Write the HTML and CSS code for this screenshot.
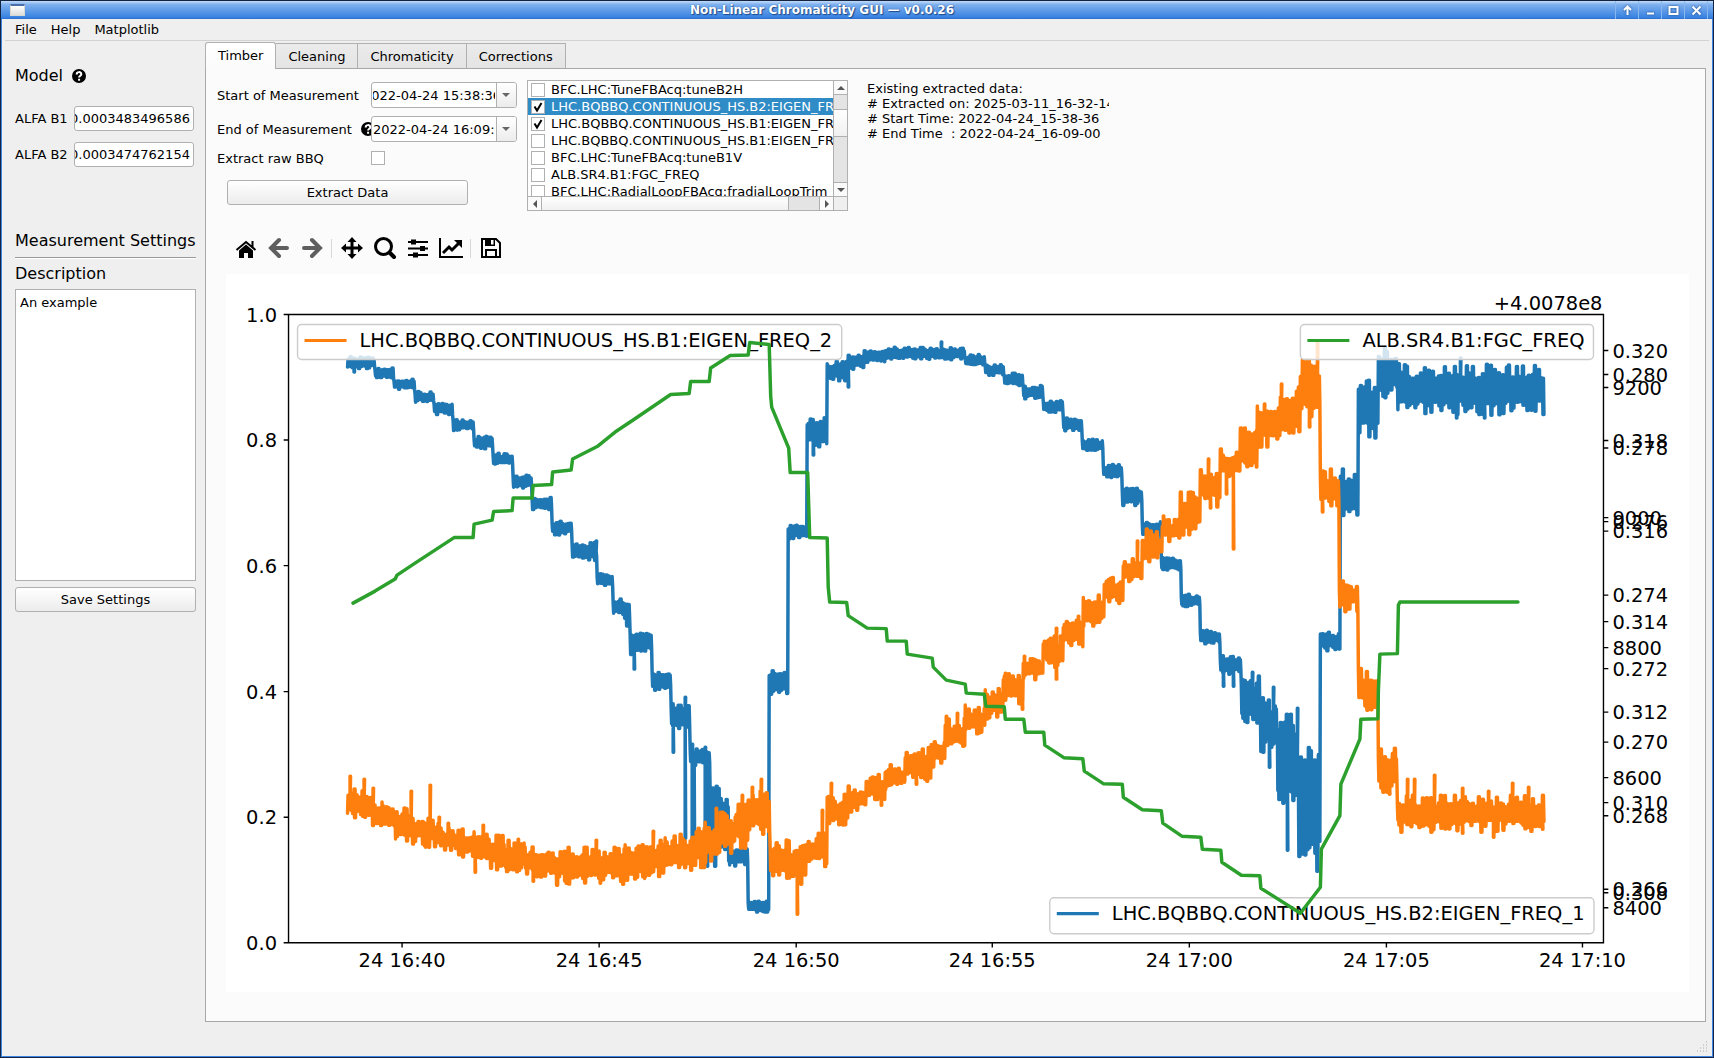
FILE: index.html
```html
<!DOCTYPE html>
<html lang="en">
<head>
    <meta charset="UTF-8">
    <meta name="description" content="Non-Linear Chromaticity GUI">
    <title>Non-Linear Chromaticity GUI — v0.0.26</title>
    <link rel="stylesheet" href="styles.css">
</head>
<body>
    <div class="window">
        <header class="titlebar">
            <span class="app-icon"></span>
            <h1>Non-Linear Chromaticity GUI — v0.0.26</h1>
            <div class="window-buttons">
                <button type="button" aria-label="Keep above"><svg viewBox="0 0 11 11"><path d="M5.500 1v9M2 5l3.500-3.500L9 5" /></svg></button>
                <button type="button" aria-label="Minimize"><svg viewBox="0 0 11 11"><path d="M2 8.500h7" /></svg></button>
                <button type="button" aria-label="Maximize"><svg viewBox="0 0 11 11"><path d="M1.500 2h8v7h-8z" /></svg></button>
                <button type="button" aria-label="Close"><svg viewBox="0 0 11 11"><path d="M1.500 1.500l8 8M9.500 1.500l-8 8" /></svg></button>
            </div>
        </header>

        <div class="frame">
            <nav class="menubar">
                <a href="#">File</a>
                <a href="#">Help</a>
                <a href="#">Matplotlib</a>
            </nav>

            <div class="main">
                <aside class="sidebar">
                    <h2 class="model-title">Model
                        <svg class="help" viewBox="0 0 14 14"><circle cx="7" cy="7" r="7" /><path d="M4.700 5.400C4.700 2.400 9.300 2.400 9.300 5.200 9.300 6.800 7.100 6.700 7.100 8.500M7.100 9.800v1.900" /></svg>
                    </h2>
                    <div class="alfa-row">
                        <label for="alfaB1">ALFA B1</label>
                        <input type="text" id="alfaB1" value="0.0003483496586" data-scroll="200">
                    </div>
                    <div class="alfa-row">
                        <label for="alfaB2">ALFA B2</label>
                        <input type="text" id="alfaB2" value="0.0003474762154" data-scroll="200">
                    </div>
                    <h2 class="settings-title">Measurement Settings</h2>
                    <label class="description-label" for="description">Description</label>
                    <textarea id="description">An example</textarea>
                    <button type="button" class="btn">Save Settings</button>
                </aside>

                <section class="tabs">
                    <div class="tablist" role="tablist">
                        <button type="button" class="tab active" role="tab" aria-selected="true">Timber</button>
                        <button type="button" class="tab" role="tab">Cleaning</button>
                        <button type="button" class="tab" role="tab">Chromaticity</button>
                        <button type="button" class="tab" role="tab">Corrections</button>
                    </div>

                    <div class="pane">
                        <div class="top">
                            <form class="extract-form">
                                <label for="start">Start of Measurement</label>
                                <div class="datebox">
                                    <input type="text" id="start" value="2022-04-24 15:38:36" data-scroll="10">
                                    <button type="button" aria-label="Pick start date"></button>
                                </div>
                                <label for="end">End of Measurement
                                    <svg class="help" viewBox="0 0 14 14"><circle cx="7" cy="7" r="7" /><path d="M4.700 5.400C4.700 2.400 9.300 2.400 9.300 5.200 9.300 6.800 7.100 6.700 7.100 8.500M7.100 9.800v1.900" /></svg>
                                </label>
                                <div class="datebox">
                                    <input type="text" id="end" value="2022-04-24 16:09:00">
                                    <button type="button" aria-label="Pick end date"></button>
                                </div>
                                <label for="rawBbq">Extract raw BBQ</label>
                                <input type="checkbox" id="rawBbq">
                                <button type="button" class="btn extract">Extract Data</button>
                            </form>

                            <div class="listbox">
                                <ul class="variables">
                                    <li><label><input type="checkbox">BFC.LHC:TuneFBAcq:tuneB2H</label></li>
                                    <li class="selected"><label><input type="checkbox" checked>LHC.BQBBQ.CONTINUOUS_HS.B2:EIGEN_FREQ_1</label></li>
                                    <li><label><input type="checkbox" checked>LHC.BQBBQ.CONTINUOUS_HS.B1:EIGEN_FREQ_2</label></li>
                                    <li><label><input type="checkbox">LHC.BQBBQ.CONTINUOUS_HS.B1:EIGEN_FREQ_1</label></li>
                                    <li><label><input type="checkbox">BFC.LHC:TuneFBAcq:tuneB1V</label></li>
                                    <li><label><input type="checkbox">ALB.SR4.B1:FGC_FREQ</label></li>
                                    <li><label><input type="checkbox">BFC.LHC:RadialLoopFBAcq:fradialLoopTrim</label></li>
                                </ul>
                                <div class="vbar">
                                    <span class="arrow up"></span>
                                    <span class="track"><span class="thumb"></span></span>
                                    <span class="arrow down"></span>
                                </div>
                                <div class="hbar">
                                    <span class="arrow left"></span>
                                    <span class="track"><span class="thumb"></span></span>
                                    <span class="arrow right"></span>
                                </div>
                                <span class="corner"></span>
                            </div>

                            <pre class="info">Existing extracted data:
# Extracted on: 2025-03-11_16-32-14
# Start Time: 2022-04-24_15-38-36
# End Time  : 2022-04-24_16-09-00</pre>
                        </div>

                        <div class="toolbar">
                            <button type="button" aria-label="Home"><svg viewBox="0 0 24 24"><path d="M12 8.500l7 6V22h-5v-5h-4v5H5v-7.500z" /><path class="roof" d="M2.500 14L12 6l9.500 8M18.500 5v6" /></svg></button>
                            <button type="button" aria-label="Back" disabled><svg viewBox="0 0 24 24"><path class="thick" d="M20 12H5M12 4l-8 8 8 8" /></svg></button>
                            <button type="button" aria-label="Forward" disabled><svg viewBox="0 0 24 24"><path class="thick" d="M4 12h15M12 4l8 8-8 8" /></svg></button>
                            <span class="sep"></span>
                            <button type="button" aria-label="Pan"><svg viewBox="0 0 24 24"><path class="mid" d="M12 4v16M4 12h16" /><path d="M12 1l4.500 5h-9zM12 23l4.500-5h-9zM1 12l5-4.500v9zM23 12l-5-4.500v9z" /></svg></button>
                            <button type="button" aria-label="Zoom"><svg viewBox="0 0 24 24"><circle class="mid" cx="10.500" cy="10.500" r="8" /><path class="thick" d="M17 17l4 4" /></svg></button>
                            <button type="button" aria-label="Configure subplots"><svg viewBox="0 0 24 24"><path class="line" d="M2 6h20M2 12.500h20M2 19h20" /><path d="M5 3.500h5v5H5zM14 10h5v5h-5zM7 16.500h5v5H7z" /></svg></button>
                            <button type="button" aria-label="Edit axes"><svg viewBox="0 0 24 24"><path class="line" d="M1 2v19h23" /><path class="mid" d="M4 17l6-6 3 3 7-7" /><path d="M15 4h8v8z" /></svg></button>
                            <span class="sep"></span>
                            <button type="button" aria-label="Save"><svg viewBox="0 0 24 24"><path class="line" d="M3 3h14l4 4v14H3zM7 21v-7h10v7" /><path d="M6 3h10v7H6z" /><path class="hole" d="M12 4h2.500v4.500H12z" /></svg></button>
                        </div>

                        <svg class="figure" id="figure" viewBox="0 0 1053 517" role="img" aria-label="Timber data"></svg>
                    </div>
                </section>
            </div>

            <footer class="statusbar">
                <svg class="grip" viewBox="0 0 12 12"><path d="M10 1h1M7 4h1M10 4h1M4 7h1M7 7h1M10 7h1M1 10h1M4 10h1M7 10h1M10 10h1" /></svg>
            </footer>
        </div>
    </div>

    <script src="plot.js"></script>
</body>
</html>
```
FILE: styles.css
```css
* {
    box-sizing: border-box;
}

body {
    margin: 0;
    font-family: "DejaVu Sans", sans-serif;
    font-size: 13px;
    color: #000;
    background-color: #14233f;
}

button, input, textarea {
    font: inherit;
    color: inherit;
}

h1, h2, ul, pre {
    margin: 0;
    padding: 0;
}

.window {
    display: flex;
    flex-direction: column;
    min-height: 100vh;
    padding: 1px;
}

/* Title bar */
.titlebar {
    display: flex;
    align-items: center;
    height: 18px;
    background: linear-gradient(#c3dcfa, #7eb0ee 20%, #5796e6 60%, #3580e0 94%, #2467c4);
}

.app-icon {
    width: 15px;
    height: 12px;
    margin: 0 4px 0 9px;
    background: linear-gradient(#fff, #ddd);
    border: 1px solid #d8d8d0;
    border-top: 2px solid #4a6ea8;
}

.titlebar h1 {
    flex: 1;
    font-size: 12px;
    line-height: 18px;
    text-align: center;
    color: #fff;
    text-shadow: 0 0 1px #1d4a8c, 1px 1px 1px #1d4a8c;
}

.window-buttons {
    display: flex;
    margin-right: 5px;
    border-right: 1px solid #8ab6ef;
}

.window-buttons button {
    width: 23px;
    height: 18px;
    padding: 3px 6px;
    background: none;
    border: none;
    border-left: 1px solid #8ab6ef;
}

.window-buttons svg {
    display: block;
    width: 11px;
    height: 11px;
    fill: none;
    stroke: #fff;
    stroke-width: 2;
    filter: drop-shadow(0 0 1px #1d4a8c);
}

.frame {
    display: flex;
    flex: 1;
    flex-direction: column;
    padding: 0 3px;
    background-color: #efefef;
    border: solid #3f87e6;
    border-width: 0 1px 1px;
}

/* Menu */
.menubar {
    display: flex;
    gap: 14px;
    height: 22px;
    padding-left: 10px;
    line-height: 21px;
    border-bottom: 1px solid #d2d2d2;
}

.menubar a {
    color: inherit;
    text-decoration: none;
}

.main {
    display: flex;
    flex: 1;
}

/* Left side */
.sidebar {
    display: flex;
    flex-direction: column;
    width: 200px;
    padding: 25px 9px 0 10px;
}

.sidebar h2, .description-label {
    font-size: 16px;
    font-weight: normal;
    line-height: 20px;
    white-space: nowrap;
}

.help {
    flex: none;
    width: 14px;
    height: 14px;
}

.help path {
    fill: none;
    stroke: #fff;
    stroke-width: 2;
}

.model-title {
    display: flex;
    align-items: center;
    gap: 9px;
    margin-bottom: 20px;
}

.alfa-row {
    display: flex;
    align-items: center;
    justify-content: space-between;
    margin: 0 2px 11px 0;
}

.alfa-row input {
    width: 120px;
    height: 25px;
    padding: 0 3px 0 0;
    border: 1px solid #b0b0b0;
    border-radius: 3px;
}

.settings-title {
    height: 27px;
    margin-top: 53px;
    border-bottom: 1px solid #999;
    box-shadow: 0 1px #fff;
}

.description-label {
    margin: 6px 0 5px;
}

#description {
    height: 292px;
    margin-bottom: 6px;
    padding: 5px 4px;
    border: 1px solid #b0b0b0;
    resize: none;
}

.btn {
    height: 25px;
    padding: 0;
    background: linear-gradient(#fff, #ececec);
    border: 1px solid #b0b0b0;
    border-radius: 3px;
}

/* Tabs */
.tabs {
    display: flex;
    flex: 1;
    flex-direction: column;
    min-width: 0;
    padding: 1px 3px 0 0;
}

.tablist {
    display: flex;
    align-items: flex-end;
    height: 26px;
}

.tab {
    height: 25px;
    padding: 0 12px;
    background: linear-gradient(#ebebeb, #e4e4e4);
    border: solid #b0b0b0;
    border-width: 1px 1px 0 0;
}

.tab.active {
    height: 27px;
    margin-bottom: -1px;
    padding-bottom: 1px;
    background: linear-gradient(#fff, #fbfbfb);
    border-left-width: 1px;
    border-radius: 3px 3px 0 0;
    position: relative;
}

.pane {
    flex: 1;
    padding: 11px 16px 27px 11px;
    background-color: #fbfbfb;
    border: 1px solid #a8a8a8;
}

.top {
    display: flex;
    align-items: flex-start;
}

.extract-form {
    display: grid;
    grid-template-columns: 154px 146px;
    grid-template-rows: 26px 26px 16px 25px;
    row-gap: 8px;
    align-items: center;
    margin-right: 10px;
    padding-top: 2px;
}

.extract-form label {
    display: flex;
    align-items: center;
    gap: 9px;
    white-space: nowrap;
}

.datebox {
    display: flex;
    height: 26px;
    background-color: #fff;
    border: 1px solid #b0b0b0;
    border-radius: 3px;
    overflow: hidden;
}

.datebox input {
    flex: 1;
    min-width: 0;
    padding: 0 1px;
    background: none;
    border: none;
}

.datebox button {
    width: 20px;
    padding: 0 0 0 5px;
    background: linear-gradient(#fff, #ececec);
    border: none;
    border-left: 1px solid #b0b0b0;
}

.datebox button::before {
    content: "";
    display: block;
    width: 0;
    border: solid transparent;
    border-width: 4px 4px 0;
    border-top-color: #666;
}

input[type="checkbox"] {
    flex: none;
    appearance: none;
    width: 14px;
    height: 14px;
    margin: 0;
    background: #fff center no-repeat;
    border: 1px solid #b0b0b0;
}

input[type="checkbox"]:checked {
    background-image: url("data:image/svg+xml,%3Csvg xmlns='http://www.w3.org/2000/svg' width='12' height='12'%3E%3Cpath d='M2.500 5.500L5 9.500 9.500 2' fill='none' stroke='black' stroke-width='2'/%3E%3C/svg%3E");
}

.extract {
    grid-column: 1 / 3;
    width: 241px;
    margin: 12px 0 0 10px;
}

/* Variable list */
.listbox {
    display: grid;
    grid-template-columns: minmax(0, 1fr) 14px;
    grid-template-rows: 115px 14px;
    width: 321px;
    margin-right: 19px;
    background-color: #fff;
    border: 1px solid #b0b0b0;
}

.variables {
    list-style: none;
    overflow: hidden;
}

.variables label {
    display: flex;
    align-items: center;
    gap: 6px;
    height: 17px;
    padding-left: 3px;
    white-space: nowrap;
}

.variables .selected {
    color: #fff;
    background-color: #308cc6;
}

.vbar, .hbar {
    display: flex;
    background-color: #e4e4e4;
    border: solid #b0b0b0;
}

.vbar {
    flex-direction: column;
    border-width: 0 0 0 1px;
}

.hbar {
    border-width: 1px 0 0;
}

.track {
    display: flex;
    flex: 1;
}

.vbar .track {
    flex-direction: column;
    border: solid #b0b0b0;
    border-width: 1px 0;
}

.hbar .track {
    border: solid #b0b0b0;
    border-width: 0 1px;
}

.thumb {
    background: linear-gradient(#fff, #f0f0f0);
}

.vbar .thumb {
    height: 28px;
    margin-top: 14px;
    border: solid #b0b0b0;
    border-width: 1px 0;
}

.hbar .thumb {
    width: 89%;
    border-right: 1px solid #b0b0b0;
}

.arrow {
    display: flex;
    align-items: center;
    justify-content: center;
    width: 13px;
    height: 13px;
    background-color: #fafafa;
}

.arrow::before {
    content: "";
    border: 4px solid transparent;
}

.up::before {
    border-top-width: 0;
    border-bottom-color: #555;
}

.down::before {
    border-bottom-width: 0;
    border-top-color: #555;
}

.left::before {
    border-left-width: 0;
    border-right-color: #555;
}

.right::before {
    border-right-width: 0;
    border-left-color: #555;
}

.corner {
    background-color: #efefef;
    border: solid #b0b0b0;
    border-width: 1px 0 0 1px;
}

.info {
    width: 242px;
    padding-top: 1px;
    overflow: hidden;
    font: inherit;
    line-height: 15px;
}

/* Matplotlib toolbar and figure */
.toolbar {
    display: flex;
    align-items: center;
    gap: 9px;
    margin: 25px 0 14px 17px;
}

.toolbar button {
    width: 24px;
    height: 24px;
    padding: 0;
    background: none;
    border: none;
}

.toolbar button:disabled {
    opacity: .62;
}

.toolbar svg {
    display: block;
}

.toolbar .line, .toolbar .roof, .toolbar .mid, .toolbar .thick {
    fill: none;
    stroke: #000;
    stroke-width: 2;
}

.toolbar .mid {
    stroke-width: 3;
}

.toolbar .thick {
    stroke-width: 4;
    stroke-linecap: round;
}

.toolbar .hole {
    fill: #fff;
}

.sep {
    width: 1px;
    height: 19px;
    margin: 0 -1px 0 -2px;
    background-color: #d8d8d8;
}

.figure {
    display: block;
    width: calc(100% - 9px);
    margin-left: 9px;
    background-color: #fff;
}

.figure text {
    font-size: 14px;
}

.axis {
    fill: none;
    stroke: #000;
}

.series {
    fill: none;
    stroke-width: 2.5;
    stroke-linejoin: round;
    stroke-linecap: round;
}

.blue {
    stroke: #1f77b4;
}

.orange {
    stroke: #ff7f0e;
}

.green {
    stroke: #2ca02c;
}

.legend {
    fill: #fff;
    fill-opacity: .8;
    stroke: #ccc;
}

/* Status bar */
.statusbar {
    display: flex;
    align-items: flex-end;
    justify-content: flex-end;
    height: 34px;
    padding: 0 1px 3px;
}

.grip {
    width: 12px;
    height: 12px;
    stroke: #aaa;
}
```
FILE: plot.js
```js
// Figure pixels (100 dpi) are turned into points (72 dpi), the unit of the svg
const LEFT = 226;
const TOP = 274;
const px = x => ((x - LEFT) * 0.72).toFixed(2);
const py = y => ((y - TOP) * 0.72).toFixed(2);

// Each step is [end of step, highest, lowest]
const blueSteps = [
    [375, 358, 367], [394, 369, 377], [415, 380, 388], [434, 393, 401], [453, 405, 413], [474, 421, 429],
    [493, 438, 447], [513, 455, 464], [532, 476, 487], [552, 498, 508], [572, 523, 533], [597, 545, 558],
    [613, 575, 585], [624, 601, 612], [630, 601, 622], [652, 633, 651], [671, 672, 688], [690, 704, 728], [710, 751, 763],
    [729, 794, 858], [748, 848, 864], [769, 901, 911], [788, 673, 692], [807, 527, 537], [827, 420, 443],
    [848, 364, 378], [864, 355, 367], [885, 351, 361], [965, 349, 358], [985, 356, 365], [1004, 366, 374],
    [1023, 375, 384], [1043, 387, 397], [1063, 402, 411], [1082, 419, 429], [1103, 441, 450], [1122, 466, 476],
    [1142, 490, 503], [1161, 523, 533], [1181, 559, 569], [1200, 596, 605], [1220, 632, 642], [1241, 658, 672],
    [1250, 682, 720], [1260, 682, 722], [1268, 702, 745], [1277, 705, 745], [1298, 722, 795], [1320, 748, 863],
    [1340, 634, 648], [1358, 475, 516], [1378, 384, 430], [1390, 354, 394], [1397, 354, 386], [1544, 371, 408]
];
const blueSpikes = {
    354: 372, 596: 541, 634: 669, 673: 752, 685: [697, 838], 692: [744, 856], 694: 858, 705: [747, 864], 707: 866,
    813: 455, 848: 387, 941: 342, 1223: 686, 1233: 686, 1252: 672, 1269: 767, 1273: 687, 1287: 850,
    1297: 708, 1460: 358, 1456: 418, 1484: 418
};

const orangeSteps = [
    [372, 795, 813], [383, 806, 822], [395, 809, 823], [410, 812, 834], [425, 820, 839], [440, 824, 841],
    [455, 831, 847], [475, 835, 850], [490, 840, 855], [505, 843, 864], [525, 848, 866], [550, 852, 870],
    [600, 855, 877], [625, 854, 876], [645, 850, 872], [665, 848, 870], [690, 842, 866], [705, 836, 862],
    [720, 830, 857], [735, 820, 845], [748, 812, 840], [770, 798, 826], [790, 846, 870], [806, 853, 876],
    [827, 841, 860], [848, 802, 820], [866, 792, 806], [885, 780, 794], [905, 770, 784], [931, 754, 773],
    [945, 743, 760], [965, 726, 744], [985, 712, 728], [1003, 694, 713], [1023, 680, 697], [1043, 662, 675],
    [1063, 642, 660], [1083, 625, 640], [1104, 599, 618], [1123, 582, 599], [1142, 563, 576], [1162, 537, 555],
    [1180, 524, 536], [1200, 500, 527], [1220, 477, 499], [1240, 455, 473], [1257, 436, 460], [1280, 412, 439],
    [1300, 395, 425], [1320, 368, 410], [1339, 477, 498], [1358, 587, 604], [1378, 676, 702], [1397, 756, 784],
    [1544, 803, 824]
];
const orangeSpikes = {
    350: 776, 364: 779, 373: 788, 411: 791, 430: 785, 439: 817, 448: 823, 475: 872, 483: 825, 518: 839,
    533: 881, 566: 883, 596: 840, 600: 883, 653: 831, 716: 808, 742: 795, 752: 787, 761: 779, 797: 914,
    822: 810, 831: 783, 881: 805, 916: 784, 946: 716, 957: 713, 1005: 673, 1022: 709, 1024: 656,
    1056: [628, 679], 1078: 616, 1137: 541, 1163: 516, 1208: 459, 1210: 508, 1226: 494, 1233: 549,
    1256: 467, 1264: 404, 1281: 384, 1309: 427, 1317: 343, 1322: 512, 1389: 794, 1407: 779, 1414: 779,
    1434: 775, 1462: [788, 833], 1488: 791, 1493: 837, 1512: 783, 1528: 787, 1542: 829
};

const greenLine = [
    [353, 603], [375, 591], [395, 579], [397, 575], [415, 563], [454, 537.5], [473, 537.5], [474, 524],
    [492, 520], [493.5, 511.5], [512, 510.5], [513, 498], [532, 498], [533, 485.5], [551.5, 484.5], [552.5, 472],
    [571, 470], [572.5, 459], [597, 446.5], [615, 432], [633, 420], [670.5, 394.5], [689, 393.5], [690.5, 381.5],
    [709, 381.5], [710.5, 368], [730, 355.5], [748, 355], [749.5, 342.5], [769, 344.5], [770.5, 396], [771.5, 407],
    [788.5, 448], [790, 472.5], [807.5, 472.5], [809.5, 537.5], [827, 538], [828, 587], [829.5, 602],
    [846.5, 602.5], [848, 615.5], [867, 628], [886, 628.5], [887, 641], [906, 641], [907, 654], [932, 658],
    [933, 667], [946, 680], [965, 684], [966, 693], [984, 694], [985.5, 706], [1004, 706.5], [1005, 719],
    [1023.5, 719], [1025, 732], [1043.5, 732], [1044.5, 745], [1063.5, 757.5], [1082.5, 758.5], [1084, 771],
    [1103, 783.5], [1122, 784], [1123, 797], [1142, 809.5], [1161, 810.5], [1162.5, 823], [1181.5, 836],
    [1200.5, 837], [1202, 849], [1220.5, 850], [1221.5, 862], [1241, 875], [1259.5, 875.5], [1260.5, 888],
    [1300, 913], [1320, 887], [1321, 849], [1339.5, 815.5], [1340.5, 784], [1359.5, 739], [1360.5, 719],
    [1377.5, 718.5], [1378, 690], [1379.5, 654], [1397, 653.5], [1398, 605], [1399.5, 602], [1517.5, 602]
];

const xTicks = [
    [402, "24 16:40"], [599, "24 16:45"], [796, "24 16:50"], [992, "24 16:55"],
    [1189, "24 17:00"], [1386, "24 17:05"], [1582, "24 17:10"]
];
const yTicks = [[314.5, "1.0"], [440, "0.8"], [565.5, "0.6"], [691.5, "0.4"], [817, "0.2"], [942.5, "0.0"]];
const rightTicks = [
    [350.5, "0.320"], [440.5, "0.318"], [531, "0.316"], [621.5, "0.314"], [712, "0.312"], [802.5, "0.310"], [892.5, "0.308"],
    [374.5, "0.280"], [448, "0.278"], [521.5, "0.276"], [595, "0.274"], [668.5, "0.272"], [742, "0.270"], [815.5, "0.268"], [889, "0.266"],
    [387.5, "9200"], [517.5, "9000"], [647.5, "8800"], [777.5, "8600"], [907.5, "8400"]
];

let seed = 26;
function random() {
    seed = (seed * 16807) % 2147483647;
    return seed / 2147483647;
}

function noisy(steps, spikes, roughness) {
    const points = [];
    let x = 347.5;
    let side = 1;
    let sizes = [1, 1];
    for (const [end, high, low] of steps) {
        const middle = (high + low) / 2;
        const half = (low - high) / 2;
        for (; x < end; x += 0.5) {
            // a new envelope every 2 px, above and below on their own
            if (x % 2 === 0) {
                sizes = sizes.map(() => 0.6 + roughness * random() ** 2);
            }
            const size = side > 0 ? sizes[0] : sizes[1];
            points.push([x, middle + side * Math.min(half * size, half + 8)]);
            side = -side;
            if (x in spikes) {
                for (const y of [].concat(spikes[x])) {
                    points.push([x, y], [x + 0.5, y], [x, middle]);
                }
            }
        }
    }
    return points;
}

function series(points, color) {
    const list = points.map(([x, y]) => px(x) + "," + py(y)).join(" ");
    return `<polyline class="series ${color}" points="${list}" />`;
}

function text(x, y, label, anchor) {
    return `<text x="${px(x)}" y="${py(y)}" text-anchor="${anchor}">${label}</text>`;
}

function legend(x, y, width, height, color, label) {
    return `<rect class="legend" x="${px(x)}" y="${py(y)}" width="${width * 0.72}" height="${height * 0.72}" rx="3" />
        <path class="${color}" stroke-width="2.300" d="M${px(x + 7)} ${py(y + 16)}H${px(x + 49)}" />`
        + text(x + 62, y + 22, label, "start");
}

function axes() {
    let path = `M${px(288.5)} ${py(314.5)}H${px(1603)}V${py(942.5)}H${px(288.5)}Z`;
    let labels = "";
    for (const [x, label] of xTicks) {
        path += `M${px(x)} ${py(942.5)}v3.500`;
        labels += text(x, 967, label, "middle");
    }
    for (const [y, label] of yTicks) {
        path += `M${px(288.5)} ${py(y)}h-3.500`;
        labels += text(277, y + 7, label, "end");
    }
    for (const [y, label] of rightTicks) {
        path += `M${px(1603)} ${py(y)}h3.500`;
        labels += text(1612, y + 7, label, "start");
    }
    labels += text(1602, 310, "+4.0078e8", "end");
    return `<path class="axis" d="${path}" />` + labels;
}

document.getElementById("figure").innerHTML =
    series(noisy(blueSteps, blueSpikes, 0.8), "blue")
    + legend(1049.5, 897.5, 544, 36, "blue", "LHC.BQBBQ.CONTINUOUS_HS.B2:EIGEN_FREQ_1")
    + series(noisy(orangeSteps, orangeSpikes, 1.3), "orange")
    + legend(297.5, 324.5, 544, 35, "orange", "LHC.BQBBQ.CONTINUOUS_HS.B1:EIGEN_FREQ_2")
    + series(greenLine, "green")
    + legend(1300, 324.5, 293, 35, "green", "ALB.SR4.B1:FGC_FREQ")
    + axes();

document.querySelectorAll("input[data-scroll]").forEach(input => {
    input.scrollLeft = Number(input.dataset.scroll);
});
```
